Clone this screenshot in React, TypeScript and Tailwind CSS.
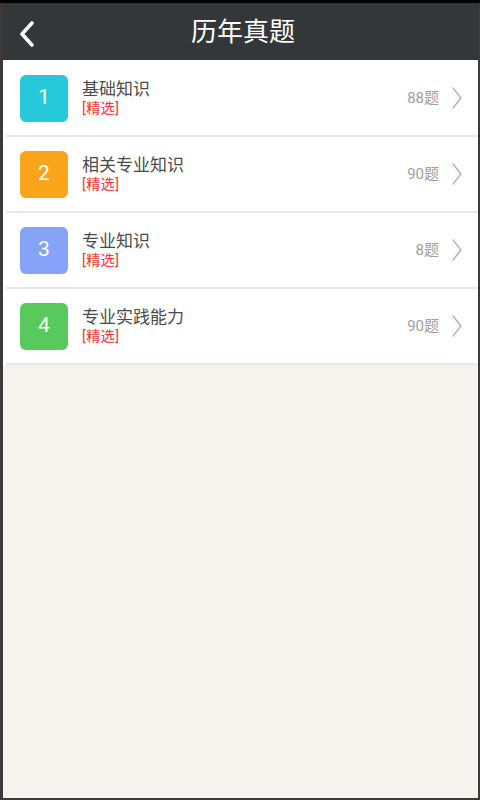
import React from "react";

const items = [
  { n: "1", title: "基础知识", count: "88题", color: "bg-[#26c9d9]" },
  { n: "2", title: "相关专业知识", count: "90题", color: "bg-[#f9a51a]" },
  { n: "3", title: "专业知识", count: "8题", color: "bg-[#86a3fa]" },
  { n: "4", title: "专业实践能力", count: "90题", color: "bg-[#58c95d]" },
];

export default function App() {
  return (
    <div
      className="w-[480px] h-[800px] bg-[#3a3a3a] flex flex-col overflow-hidden"
      style={{ fontFamily: 'Roboto, "Noto Sans CJK SC", sans-serif' }}
    >
      <div className="h-[3px] bg-black shrink-0" />
      <div className="flex-1 flex flex-col ml-[3px] mr-[2px] mb-[2px] bg-[#f5f3ec]">
        <div className="h-[57px] shrink-0 bg-[#33373a] relative flex items-center justify-center">
          <svg className="absolute left-[14px] top-[17px]" width="20" height="28" viewBox="0 0 20 28">
            <path d="M15 3 L5 14 L15 25" fill="none" stroke="white" strokeWidth="3.6" strokeLinecap="round" strokeLinejoin="round" />
          </svg>
          <span className="text-white text-[26px] leading-none ml-[5px]">历年真题</span>
        </div>
        <div className="bg-white pt-[1px]">
          {items.map((it) => (
            <div key={it.n} className="h-[76px] flex items-center border-b-2 border-[#e8e8e8] ml-[3px]">
              <div className={`w-[48px] h-[47px] rounded-[6px] ${it.color} flex items-center justify-center text-white text-[21px] ml-[14px]`}>
                {it.n}
              </div>
              <div className="flex flex-col ml-[14px]">
                <span className="text-[17px] leading-[20px] text-[#4a4a4a]">{it.title}</span>
                <span className="text-[14px] leading-[17px] text-[#ff3030] mt-[1px] tracking-[0.5px]">[精选]</span>
              </div>
              <div className="flex-1" />
              <span className="text-[15px] text-[#a0a0a0] mt-[1px]">{it.count}</span>
              <svg className="ml-[12px] mr-[15px]" width="12" height="24" viewBox="0 0 12 24">
                <path d="M2 2 L10 12 L2 22" fill="none" stroke="#b8b8b8" strokeWidth="1.6" strokeLinecap="round" strokeLinejoin="round" />
              </svg>
            </div>
          ))}
        </div>
      </div>
    </div>
  );
}
